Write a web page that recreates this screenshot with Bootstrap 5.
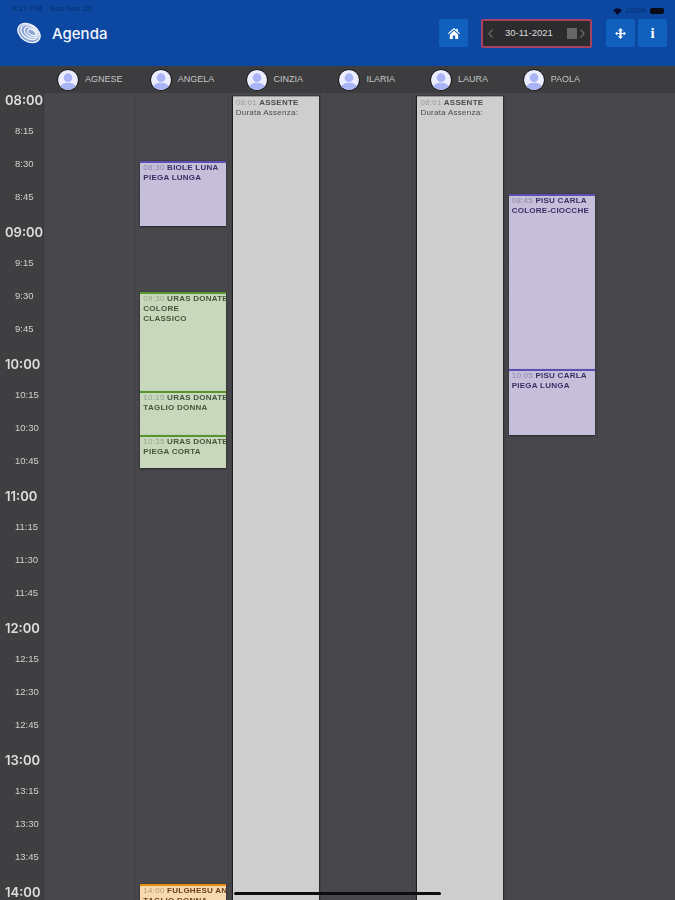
<!doctype html>
<html lang="it">
<head>
<meta charset="utf-8">
<title>Agenda</title>
<link href="https://cdn.jsdelivr.net/npm/bootstrap@5.3.0/dist/css/bootstrap.min.css" rel="stylesheet">
<style>
body{background:#47474c;overflow:hidden;font-family:"Liberation Sans",Arial,sans-serif}
.app-shell{height:900px;filter:blur(.5px)}
.top-band{height:66px;background:#0c47a1;color:#fff;flex:none}
.status-row{height:18px;padding:4px 11px 0 12px;font-size:8px;color:#06306f;line-height:10px}
.status-batt{width:14px;height:6px;background:#0a0a14;border-radius:2px}
.tool-row{padding:0 8px 0 16px;height:30px}
.logo-mark{flex:none}
.app-title{font:500 15px/1 Inter,"Liberation Sans",sans-serif;margin-left:9px;color:#f2f5fb}
.tool-btn{width:29px;height:28px;padding:0;background:#1160bd;border:0;border-radius:2px;color:#fff}
.tool-btn:hover{background:#1160bd}
.info-glyph{font:700 15px/1 "Liberation Serif",serif;margin-left:3px}
.date-box{width:111px;height:29px;background:#2c2c2e;border:2px solid #a8405f;border-radius:2px;margin:0 14px 0 13px;padding:0 5px;color:#dcdcdc;font-size:9.5px}
.date-label{margin-left:12px}
.date-cal{width:10px;height:11px;background:#666;margin-left:auto;margin-right:3px}
.col-band{height:27px;background:#3d3d3f;flex:none}
.time-spacer{width:43px;flex:none}
.col-head{width:92.35px;flex:none;gap:6px;color:#c6c6c6;font-size:9px;border-left:1px solid #3a3a3c}
.face{width:22px;height:22px;flex:none;border-radius:50%;border:1.5px solid #111;background:#eceeff}
.grid-area{height:807px}
.time-rail{width:44px;flex:none;background:#3f3f42;border-right:1px solid #36363a}
.time-cell{height:33px;flex:none;color:#d0d0d0;font:9.5px/10px "Liberation Sans",sans-serif;padding-left:15px;white-space:nowrap}
.time-hour{font:600 13px/14px Inter,"Liberation Sans",sans-serif;color:#dedede;padding-left:5px}
.day-col{width:92.35px;flex:none;height:807px;border-right:1px solid #424247;
 background:repeating-linear-gradient(to bottom,#47474c 0,#47474c 31.875px,#434348 31.875px,#434348 32.875px) 0 2px}
.appt{position:absolute;left:4px;width:86px;padding:0 3px;font:700 8px/10px "Liberation Sans",sans-serif;letter-spacing:.25px;overflow:hidden;box-shadow:0 1px 2px rgba(0,0,0,.5);text-transform:uppercase}
.appt-shift{left:3px}
.appt-line{white-space:nowrap;display:block}
.appt-time{font-weight:400;opacity:.4}
.appt-note{font-weight:400}
.tone-lilac{background:#c6bfd9;border-top:2px solid #5e4db3;color:#3a2e66}
.tone-green{background:#c9d8bd;border-top:2px solid #56962c;color:#47563a}
.tone-orange{background:#f6d9ae;border-top:2px solid #e58f0b;color:#6a3f18}
.tone-grey{background:#cecece;border-top:1px solid #999;color:#4b4b4b;box-shadow:-1px 0 1px #1c1c21,1px 0 1px #2a2a2f;text-transform:none;padding-top:1px}
.home-bar{position:absolute;left:234px;top:892px;width:207px;height:3px;background:#0c0c0e;border-radius:2px}
</style>
</head>
<body>
<div class="app-shell d-flex flex-column position-relative">
  <header class="top-band">
    <div class="status-row d-flex justify-content-between">
      <span class="d-flex gap-2"><span>4:17 PM</span><span>Sun Nov 28</span></span>
      <span class="d-flex align-items-center gap-1">
        <svg width="9" height="7" viewBox="0 0 10 8"><path d="M0 2.5a7 7 0 0 1 10 0L5 8z" fill="#0a0a2c"/></svg>
        <span>100%</span><span class="status-batt"></span>
      </span>
    </div>
    <div class="tool-row d-flex align-items-center">
      <svg class="logo-mark" width="27" height="26" viewBox="0 0 27 26" fill="none" stroke="#eef2fa">
        <g transform="rotate(32 13 13)">
          <ellipse cx="13" cy="13" rx="12" ry="8.500" fill="#8ea6d3" stroke-width="1.300"/>
          <ellipse cx="13" cy="12" rx="9.500" ry="6.500" stroke-width="1.300"/>
          <ellipse cx="14" cy="11.500" rx="7" ry="4.500" stroke-width="1.300"/>
          <ellipse cx="15" cy="11" rx="4.400" ry="2.600" stroke-width="1.300"/>
        </g>
      </svg>
      <span class="app-title">Agenda</span>
      <div class="ms-auto d-flex align-items-center">
        <button class="btn tool-btn d-flex align-items-center justify-content-center" aria-label="Home">
          <svg width="12" height="11" viewBox="0 0 12 11" fill="#fff"><path d="M6 0 0 5.300l.7.8L6 1.500l5.300 4.600.7-.8L9.800 3.400V.8H8.300v1.300zM1.800 6.500V11h3V7.600h2.400V11h3V6.500L6 2.800z"/></svg>
        </button>
        <div class="date-box d-flex align-items-center">
          <svg width="5" height="9" viewBox="0 0 5 9" fill="none" stroke="#6c6c6c" stroke-width="1.200"><path d="M4.500 .5 .8 4.500l3.700 4"/></svg>
          <span class="date-label">30-11-2021</span>
          <span class="date-cal"></span>
          <svg width="5" height="9" viewBox="0 0 5 9" fill="none" stroke="#6c6c6c" stroke-width="1.200"><path d="M.5 .5l3.700 4-3.700 4"/></svg>
        </div>
        <button class="btn tool-btn d-flex align-items-center justify-content-center" aria-label="Sposta">
          <svg width="11" height="11" viewBox="0 0 11 11" fill="#fff"><path d="M5.500 0 8 2.600H6.600v2.300h2V3.500L11 5.500 8.600 7.600V6.100h-2v2.300H8L5.500 11 3 8.400h1.400V6.100h-2v1.500L0 5.500l2.400-2v1.400h2V2.600H3z"/></svg>
        </button>
        <button class="btn tool-btn info-glyph d-flex align-items-center justify-content-center" aria-label="Info">i</button>
      </div>
    </div>
  </header>

  <div class="col-band d-flex">
    <div class="time-spacer"></div>
    <div class="col-head d-flex align-items-center justify-content-center"><svg class="face" viewBox="0 0 22 22"><circle cx="11" cy="8.500" r="4.800" fill="#a9b5f6"/><path d="M2 22c0-6.500 4-8 9-8s9 1.500 9 8z" fill="#a9b5f6"/></svg><span>AGNESE</span></div>
    <div class="col-head d-flex align-items-center justify-content-center"><svg class="face" viewBox="0 0 22 22"><circle cx="11" cy="8.500" r="4.800" fill="#a9b5f6"/><path d="M2 22c0-6.500 4-8 9-8s9 1.500 9 8z" fill="#a9b5f6"/></svg><span>ANGELA</span></div>
    <div class="col-head d-flex align-items-center justify-content-center"><svg class="face" viewBox="0 0 22 22"><circle cx="11" cy="8.500" r="4.800" fill="#a9b5f6"/><path d="M2 22c0-6.500 4-8 9-8s9 1.500 9 8z" fill="#a9b5f6"/></svg><span>CINZIA</span></div>
    <div class="col-head d-flex align-items-center justify-content-center"><svg class="face" viewBox="0 0 22 22"><circle cx="11" cy="8.500" r="4.800" fill="#a9b5f6"/><path d="M2 22c0-6.500 4-8 9-8s9 1.500 9 8z" fill="#a9b5f6"/></svg><span>ILARIA</span></div>
    <div class="col-head d-flex align-items-center justify-content-center"><svg class="face" viewBox="0 0 22 22"><circle cx="11" cy="8.500" r="4.800" fill="#a9b5f6"/><path d="M2 22c0-6.500 4-8 9-8s9 1.500 9 8z" fill="#a9b5f6"/></svg><span>LAURA</span></div>
    <div class="col-head d-flex align-items-center justify-content-center"><svg class="face" viewBox="0 0 22 22"><circle cx="11" cy="8.500" r="4.800" fill="#a9b5f6"/><path d="M2 22c0-6.500 4-8 9-8s9 1.500 9 8z" fill="#a9b5f6"/></svg><span>PAOLA</span></div>
    <div class="col-head"></div>
  </div>

  <div class="grid-area d-flex overflow-hidden">
    <div class="time-rail d-flex flex-column">
      <div class="time-cell time-hour">08:00</div><div class="time-cell">8:15</div><div class="time-cell">8:30</div><div class="time-cell">8:45</div>
      <div class="time-cell time-hour">09:00</div><div class="time-cell">9:15</div><div class="time-cell">9:30</div><div class="time-cell">9:45</div>
      <div class="time-cell time-hour">10:00</div><div class="time-cell">10:15</div><div class="time-cell">10:30</div><div class="time-cell">10:45</div>
      <div class="time-cell time-hour">11:00</div><div class="time-cell">11:15</div><div class="time-cell">11:30</div><div class="time-cell">11:45</div>
      <div class="time-cell time-hour">12:00</div><div class="time-cell">12:15</div><div class="time-cell">12:30</div><div class="time-cell">12:45</div>
      <div class="time-cell time-hour">13:00</div><div class="time-cell">13:15</div><div class="time-cell">13:30</div><div class="time-cell">13:45</div>
      <div class="time-cell time-hour">14:00</div>
    </div>
    <div class="day-col position-relative"></div>
    <div class="day-col position-relative">
      <div class="appt tone-lilac" style="top:68px;height:65px"><span class="appt-line"><span class="appt-time">08:30</span> BIOLE LUNA</span><span class="appt-line">PIEGA LUNGA</span></div>
      <div class="appt tone-green" style="top:199px;height:99px"><span class="appt-line"><span class="appt-time">09:30</span> URAS DONATE</span><span class="appt-line">COLORE</span><span class="appt-line">CLASSICO</span></div>
      <div class="appt tone-green" style="top:298px;height:44px"><span class="appt-line"><span class="appt-time">10:15</span> URAS DONATE</span><span class="appt-line">TAGLIO DONNA</span></div>
      <div class="appt tone-green" style="top:342px;height:33px"><span class="appt-line"><span class="appt-time">10:35</span> URAS DONATE</span><span class="appt-line">PIEGA CORTA</span></div>
      <div class="appt tone-orange" style="top:791px;height:40px"><span class="appt-line"><span class="appt-time">14:00</span> FULGHESU AN</span><span class="appt-line">TAGLIO DONNA</span></div>
    </div>
    <div class="day-col position-relative">
      <div class="appt tone-grey" style="top:3px;height:804px"><span class="appt-line"><span class="appt-time">08:01</span> ASSENTE</span><span class="appt-line appt-note">Durata Assenza:</span></div>
    </div>
    <div class="day-col position-relative"></div>
    <div class="day-col position-relative">
      <div class="appt tone-grey" style="top:3px;height:804px"><span class="appt-line"><span class="appt-time">08:01</span> ASSENTE</span><span class="appt-line appt-note">Durata Assenza:</span></div>
    </div>
    <div class="day-col position-relative">
      <div class="appt appt-shift tone-lilac" style="top:101px;height:175px"><span class="appt-line"><span class="appt-time">08:45</span> PISU CARLA</span><span class="appt-line">COLORE-CIOCCHE</span></div>
      <div class="appt appt-shift tone-lilac" style="top:276px;height:66px"><span class="appt-line"><span class="appt-time">10:05</span> PISU CARLA</span><span class="appt-line">PIEGA LUNGA</span></div>
    </div>
    <div class="day-col"></div>
  </div>
  <div class="home-bar"></div>
</div>
</body>
</html>
